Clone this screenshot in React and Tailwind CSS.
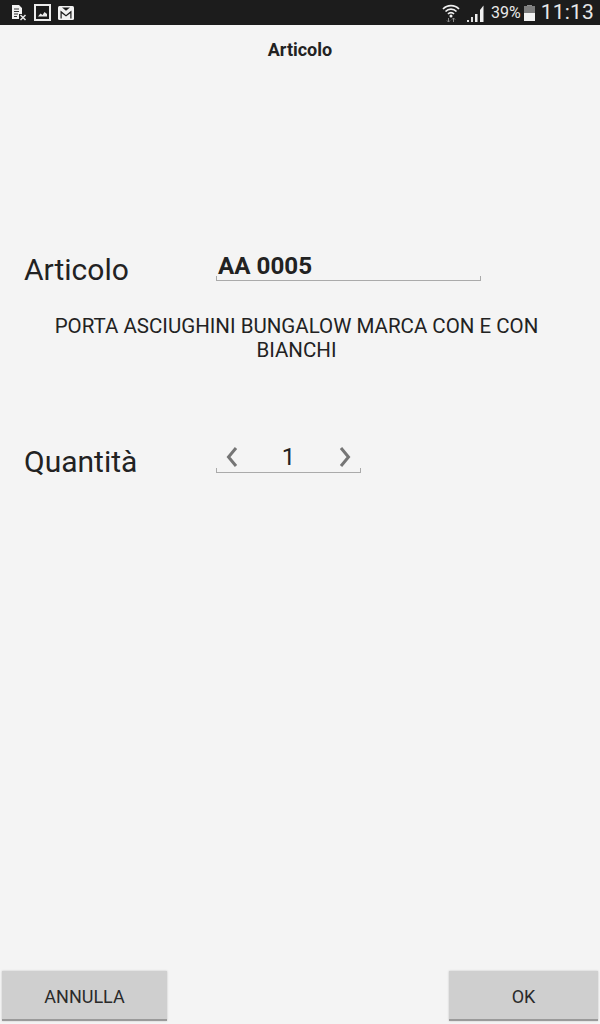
export default function App() {
  return (
    <div className="flex h-[1024px] w-[600px] flex-col overflow-hidden bg-[#f4f4f4] text-[#222222] [font-family:Roboto,sans-serif]">
      <div className="flex h-[25px] items-center justify-between bg-[#1c1c1c] pl-[11px] pr-[6px]">
        <div className="flex items-center gap-[7px]">
          <svg width="16" height="17" viewBox="0 0 16 17">
            <path d="M1 1h7l3 3v6H8v5H1z" fill="#f2f2f2" />
            <path d="M3 5h5M3 7.500h5M3 10h4M3 12.500h3" stroke="#333" strokeWidth="1" />
            <path d="M9.500 11l5 5M14.500 11l-5 5" stroke="#e8e8e8" strokeWidth="1.500" />
          </svg>
          <svg width="17" height="17" viewBox="0 0 17 17">
            <rect x="1" y="1" width="15" height="15" fill="none" stroke="#ececec" strokeWidth="2" />
            <path d="M4 12.500l2.500-3 2 1.500 2-3 2.500 2v2.500z" fill="#ececec" />
          </svg>
          <svg width="16" height="14" viewBox="0 0 16 14">
            <rect x="0" y="0" width="16" height="14" rx="1.500" fill="#f2f2f2" />
            <path d="M2.500 12.500V4.500L8 9l5.500-4.500v8h-1.200V7.200L8 10.600 3.700 7.200v5.300z" fill="#1c1c1c" />
            <path d="M4 1.500h8L8 4.800z" fill="#1c1c1c" />
          </svg>
        </div>
        <div className="flex items-center">
          <svg width="18" height="21" viewBox="0 0 18 21" className="mr-[7px]">
            <path d="M1 7a11 11 0 0116 0M3.500 9.500a7.500 7.500 0 0111 0M6 12a4 4 0 016 0" fill="none" stroke="#f0f0f0" strokeWidth="1.700" />
            <circle cx="9" cy="14" r="1.500" fill="#f0f0f0" />
            <path d="M6.500 16v4M5 18.500l1.500 1.500 1.500-1.500M11.500 20v-4M10 17.500l1.500-1.500 1.500 1.500" fill="none" stroke="#8a8a8a" strokeWidth="1" />
          </svg>
          <svg width="18" height="18" viewBox="0 0 18 18" className="mr-[6px]">
            <rect x="0" y="16" width="2" height="2" fill="#ddd" />
            <rect x="4" y="13" width="2" height="5" fill="#ddd" />
            <rect x="8" y="10" width="2.500" height="8" fill="#eee" />
            <path d="M13 6l3.500-4.500V18H13z" fill="#f0f0f0" />
          </svg>
          <span className="mr-[3px] text-[16px] leading-none text-[#e8e8e8]">39%</span>
          <div className="mr-[6px] flex h-[16px] w-[11px] flex-col items-center">
            <div className="h-[1px] w-[5px] bg-[#8c8c8c]" />
            <div className="h-[7px] w-full bg-[#7d7d7d]" />
            <div className="h-[8px] w-full bg-[#f2f2f2]" />
          </div>
          <span className="text-[21px] leading-none tracking-[0.2px] text-[#e8e8e8]">11:13</span>
        </div>
      </div>

      <h1 className="mt-[15px] text-center text-[18px] font-bold leading-[19px]">Articolo</h1>

      <div className="mt-[193px] flex items-start pl-[24px]">
        <div className="w-[192px] text-[30px] leading-[36px]">Articolo</div>
        <div className="relative -mt-[3px] h-[32px] w-[265px] border-b border-[#aaaaaa] pl-[2px] pt-[3px] text-[24.2px] font-bold leading-[29px]">
          AA 0005
          <span className="absolute bottom-0 left-0 h-[4px] w-px bg-[#aaaaaa]" />
          <span className="absolute bottom-0 right-0 h-[4px] w-px bg-[#aaaaaa]" />
        </div>
      </div>

      <p className="mx-auto mt-[26px] w-[500px] pr-[7px] text-center text-[20.5px] leading-[24px]">
        PORTA ASCIUGHINI BUNGALOW MARCA CON E CON BIANCHI
      </p>

      <div className="mt-[82px] flex items-start pl-[24px]">
        <div className="w-[192px] text-[30px] leading-[36px]">Quantità</div>
        <div className="relative -mt-[7px] flex h-[36px] w-[145px] items-center justify-between border-b border-[#aaaaaa] px-[10px] pt-[5px]">
          <svg width="12" height="22" viewBox="0 0 12 22">
            <path d="M10 2L2.500 11 10 20" fill="none" stroke="#757575" strokeWidth="3" />
          </svg>
          <span className="text-[24px] leading-none">1</span>
          <svg width="12" height="22" viewBox="0 0 12 22">
            <path d="M2 2l7.500 9L2 20" fill="none" stroke="#757575" strokeWidth="3" />
          </svg>
          <span className="absolute bottom-0 left-0 h-[4px] w-px bg-[#aaaaaa]" />
          <span className="absolute bottom-0 right-0 h-[4px] w-px bg-[#aaaaaa]" />
        </div>
      </div>

      <div className="mb-[3px] mt-auto flex justify-between px-[2px]">
        <button className="h-[50px] w-[165px] border-b-2 border-[#9a9a9a] bg-[#cfcfcf] pt-[2px] text-[18px] text-[#2a2a2a] shadow-[0_0_2px_rgba(0,0,0,0.2)]">ANNULLA</button>
        <button className="h-[50px] w-[149px] border-b-2 border-[#9a9a9a] bg-[#cfcfcf] pt-[2px] text-[18px] text-[#2a2a2a] shadow-[0_0_2px_rgba(0,0,0,0.2)]">OK</button>
      </div>
    </div>
  );
}
